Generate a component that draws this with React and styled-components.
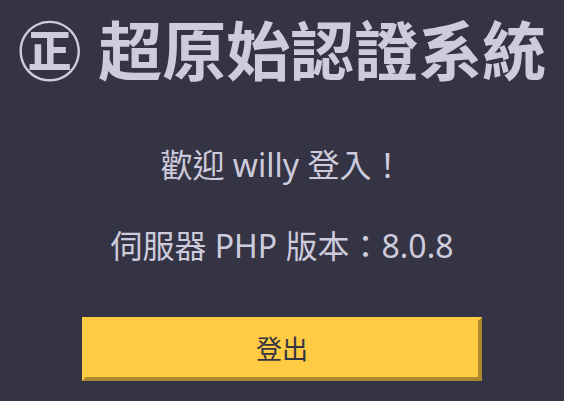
import React from "react";
import styled, { createGlobalStyle } from "styled-components";

const GlobalStyle = createGlobalStyle`
  * {
    box-sizing: border-box;
  }
  body {
    margin: 0;
    background: #353444;
    color: #cdcbdc;
    font-family: "Noto Sans", "Noto Sans CJK TC", sans-serif;
  }
`;

const Page = styled.main`
  display: flex;
  flex-direction: column;
  align-items: center;
  text-align: center;
`;

const Title = styled.h1`
  margin: 0 0 41px;
  padding-top: 3px;
  font-size: 64px;
  line-height: 96px;
  font-weight: 700;
  white-space: nowrap;
`;

const Message = styled.p`
  margin: 0 0 32px;
  font-size: 32px;
  line-height: 49px;
`;

const LogoutForm = styled.form`
  width: 100%;
  max-width: 400px;
  margin-top: 15px;
`;

const LogoutButton = styled.button`
  width: 100%;
  padding: 12px;
  border: 4px outset #ffcb43;
  background: #ffcb43;
  color: #353444;
  font-family: inherit;
  font-size: 26px;
  line-height: 32px;
`;

export default function App() {
  return (
    <>
      <GlobalStyle />
      <Page lang="zh-Hant">
        <Title>㊣ 超原始認證系統</Title>
        <Message>歡迎 willy 登入！</Message>
        <Message>伺服器 PHP 版本：8.0.8</Message>
        <LogoutForm>
          <LogoutButton type="button">登出</LogoutButton>
        </LogoutForm>
      </Page>
    </>
  );
}
